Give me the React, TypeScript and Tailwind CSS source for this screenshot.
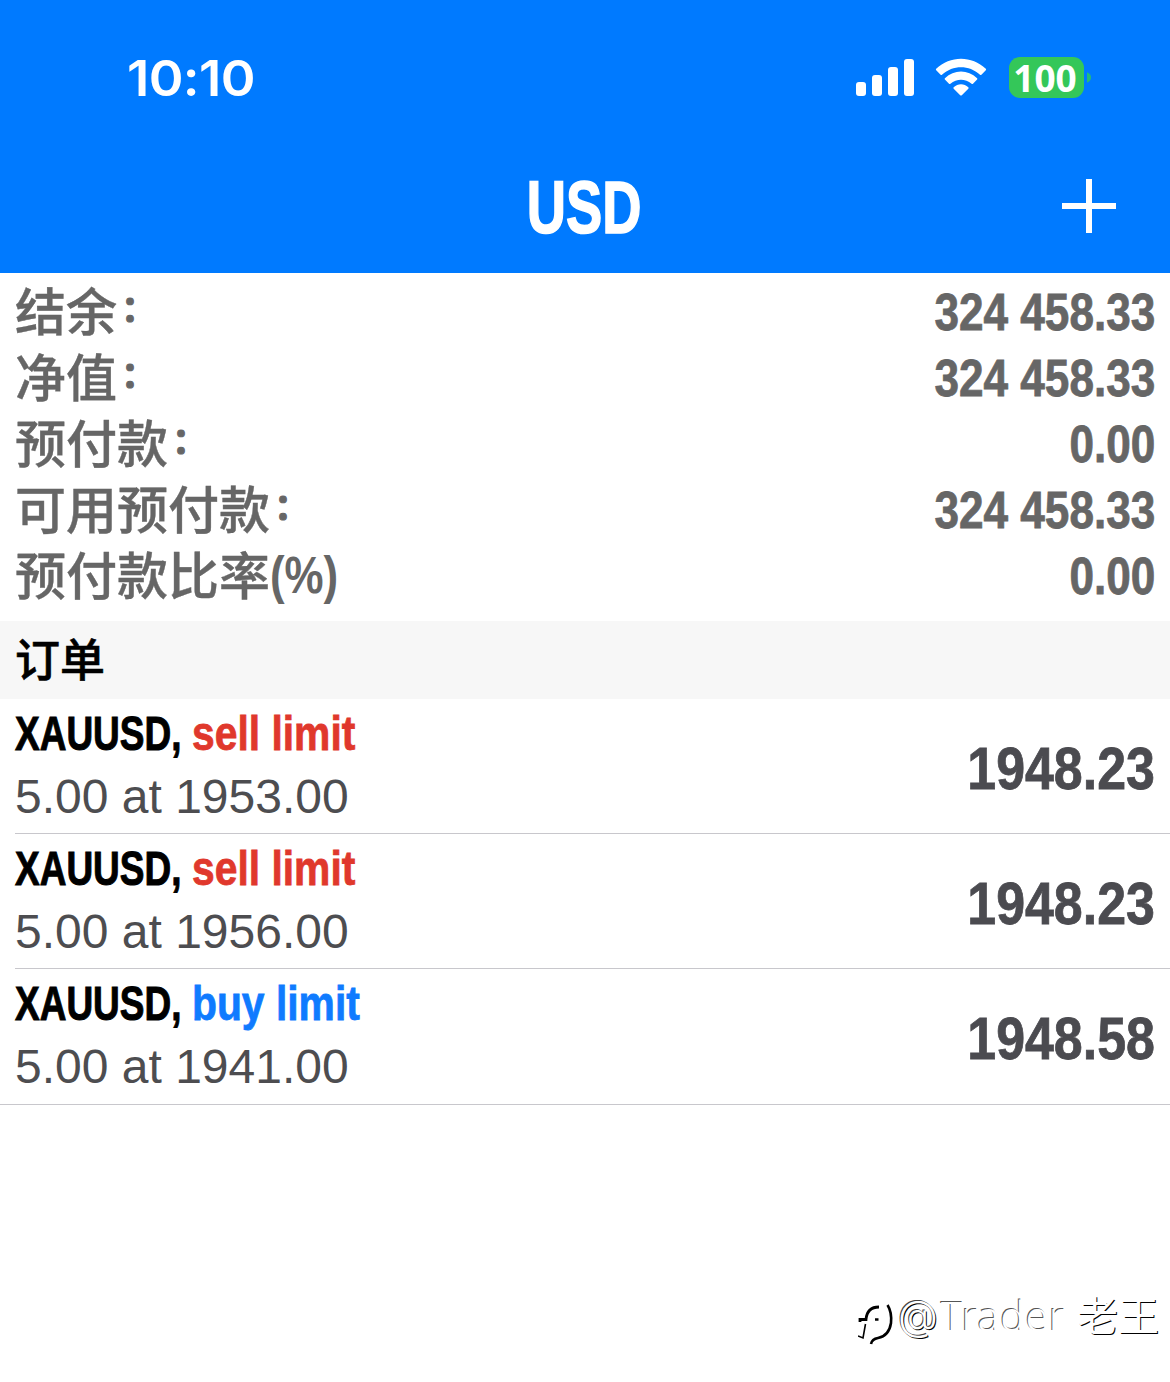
import type { ReactNode } from "react";

const balances = [
  { label: "结余", suffix: "：", value: "324 458.33" },
  { label: "净值", suffix: "：", value: "324 458.33" },
  { label: "预付款", suffix: "：", value: "0.00" },
  { label: "可用预付款", suffix: "：", value: "324 458.33" },
  { label: "预付款比率", suffix: "(%)", value: "0.00" },
];

const orders = [
  { side: "sell limit", detail: "5.00 at 1953.00", price: "1948.23", sell: true },
  { side: "sell limit", detail: "5.00 at 1956.00", price: "1948.23", sell: true },
  { side: "buy limit", detail: "5.00 at 1941.00", price: "1948.58", sell: false },
];

function StatusBar() {
  return (
    <div className="flex h-[136px] items-start justify-between pl-[127px] pr-[79px] text-white">
      <div className="mt-[48px] origin-left scale-x-[1.055] font-['Inter'] text-[50px] font-semibold leading-[60px] tracking-[-0.6px]">
        10:10
      </div>
      <div className="mt-[56px] flex items-start">
        <svg className="mt-[3px]" width="59" height="38" viewBox="0 0 59 38" fill="white">
          <rect x="0" y="23" width="10" height="14" rx="3" />
          <rect x="16" y="16" width="10" height="21" rx="3" />
          <rect x="32" y="8" width="10" height="29" rx="3" />
          <rect x="48" y="0" width="10" height="37" rx="3" />
        </svg>
        <svg className="ml-[20px] mt-[2px]" width="52" height="38" viewBox="0 0 52 38" fill="white">
          <path d="M1.2 10.8C15-2.600 37-2.600 50.8 10.800Q51.4 11.500 50.8 12.200L46.400 16.700Q45.700 17.300 45 16.700C34 6.800 18 6.800 7 16.700Q6.300 17.300 5.600 16.700L1.200 12.200Q.6 11.500 1.200 10.800Z" />
          <path d="M9.900 20.200C19 11.400 33 11.400 42.100 20.200Q42.700 20.900 42.100 21.600L38 25.800Q37.300 26.400 36.600 25.800C30.200 20.400 21.800 20.400 15.400 25.800Q14.700 26.400 14 25.800L9.900 21.600Q9.300 20.900 9.900 20.200Z" />
          <path d="M18.700 29.300C22.900 25.300 29.100 25.300 33.300 29.300Q34 30 33.300 30.700L26.800 37.200Q26 37.900 25.200 37.200L18.700 30.700Q18 30 18.700 29.300Z" />
        </svg>
        <div className="ml-[22px] mt-px flex h-[41px] w-[75px] items-center justify-center rounded-[11px] bg-[#34c759] pr-[3px] font-['Noto_Sans'] text-[37px] font-bold leading-[40px]">
          100
        </div>
        <svg className="ml-[3px] mt-[15px]" width="4" height="13" viewBox="0 0 5 13">
          <path d="M0 0Q5 2 5 6.500Q5 11 0 13Z" fill="#24b97c" />
        </svg>
      </div>
    </div>
  );
}

function Narrow({ className, children }: { className: string; children: ReactNode }) {
  return <span className={`inline-block whitespace-pre font-bold ${className}`}>{children}</span>;
}

function Label({ text, suffix }: { text: string; suffix: string }) {
  return (
    <div className="flex whitespace-nowrap pt-[2px] font-['Liberation_Sans','Noto_Sans_CJK_SC',sans-serif] text-[51px] font-medium leading-[66px]">
      <span className="[-webkit-text-stroke:0.4px_#666666]">{text}</span>
      {suffix === "：" ? (
        <span className="-mt-[4px] ml-[4px] text-[36px] font-bold [-webkit-text-stroke:1px_#666666]">{suffix}</span>
      ) : (
        <Narrow className="-mt-[2px] origin-left scale-x-[0.86]">{suffix}</Narrow>
      )}
    </div>
  );
}

export default function App() {
  return (
    <div className="flex h-[1382px] w-[1170px] flex-col overflow-hidden bg-white font-['Liberation_Sans','Noto_Sans_CJK_SC',sans-serif]">
      <header className="h-[273px] bg-[#007aff]">
        <StatusBar />
        <div className="grid grid-cols-3 pt-[24px]">
          <div />
          <div className="text-center text-white">
            <Narrow className="-ml-[2px] -mt-px scale-x-[0.725] text-[75px] leading-[96px] [-webkit-text-stroke:1.6px_white]">
              USD
            </Narrow>
          </div>
          <svg className="ml-auto mr-[54px] mt-[19px]" width="54" height="54" viewBox="0 0 54 54" fill="white">
            <rect x="24" width="6" height="54" />
            <rect y="24" width="54" height="6" />
          </svg>
        </div>
      </header>

      <section className="h-[348px] px-[15px] pt-[6px] text-[#666666]">
        {balances.map((row) => (
          <div key={row.label} className="flex h-[66px] justify-between">
            <Label text={row.label} suffix={row.suffix} />
            <Narrow className="origin-right scale-x-[0.865] text-[51px] leading-[67px] [-webkit-text-stroke:0.8px_#666666]">
              {row.value}
            </Narrow>
          </div>
        ))}
      </section>

      <h2 className="h-[78px] bg-[#f7f7f7] pl-[15px] pt-[2px] text-[45px] font-medium leading-[78px] text-black [-webkit-text-stroke:0.6px_black]">
        订单
      </h2>

      <ul className="border-b border-[#c8c7cc]">
        {orders.map((order, i) => (
          <li
            key={order.detail}
            className={`ml-[15px] flex h-[135px] justify-between pr-[15px] ${i < 2 ? "border-b border-[#c8c7cc]" : ""}`}
          >
            <div className="pt-[3px]">
              <div className="flex h-[64px] text-[49px] leading-[62px]">
                <div className="w-[177px]">
                  <Narrow className="origin-left scale-x-[0.755] text-black [-webkit-text-stroke:1px_black]">XAUUSD,</Narrow>
                </div>
                <Narrow
                  className={`origin-left scale-x-[0.833] ${
                    order.sell
                      ? "text-[#e0382c] [-webkit-text-stroke:0.8px_#e0382c]"
                      : "text-[#0f7bff] [-webkit-text-stroke:0.8px_#0f7bff]"
                  }`}
                >
                  {order.side}
                </Narrow>
              </div>
              <div className="text-[48px] leading-[62px] text-[#4d4d50]">{order.detail}</div>
            </div>
            <Narrow className="origin-right scale-x-[0.865] pt-[2px] text-[60px] leading-[135px] text-[#4b4b50] [-webkit-text-stroke:0.8px_#4b4b50]">
              {order.price}
            </Narrow>
          </li>
        ))}
      </ul>

      <footer className="mr-[11px] mt-auto flex h-[100px] items-start justify-end text-white">
        <svg className="mr-[2px] mt-[18px]" width="38" height="48" viewBox="0 0 38 48" fill="none" stroke="black">
          <path d="M2 22V19.500H8Q9 7 21 7" strokeWidth="2.800" />
          <path d="M17 19.500H20.500" strokeWidth="2.500" />
          <path d="M7.500 24L5 38L0 36" strokeWidth="1.600" />
          <path d="M29.500 5Q34 12 33 23Q31 36 20 38Q14 39 13 44" strokeWidth="2.600" />
        </svg>
        <div className="flex whitespace-pre font-['Noto_Sans'] text-[41px] font-light leading-[66px] [text-shadow:-1px_-1px_0_#555]">
          <span className="w-[43px] font-['Inter'] text-[41px] [text-shadow:1px_1px_0_#000,-1px_-1px_0_#444]">@</span>
          <span className="tracking-[0.7px]">Trader </span>
          <span className="-mt-[2px] font-['Noto_Sans_CJK_SC'] font-normal [text-shadow:1px_1px_0_#000]">老王</span>
        </div>
      </footer>
    </div>
  );
}
